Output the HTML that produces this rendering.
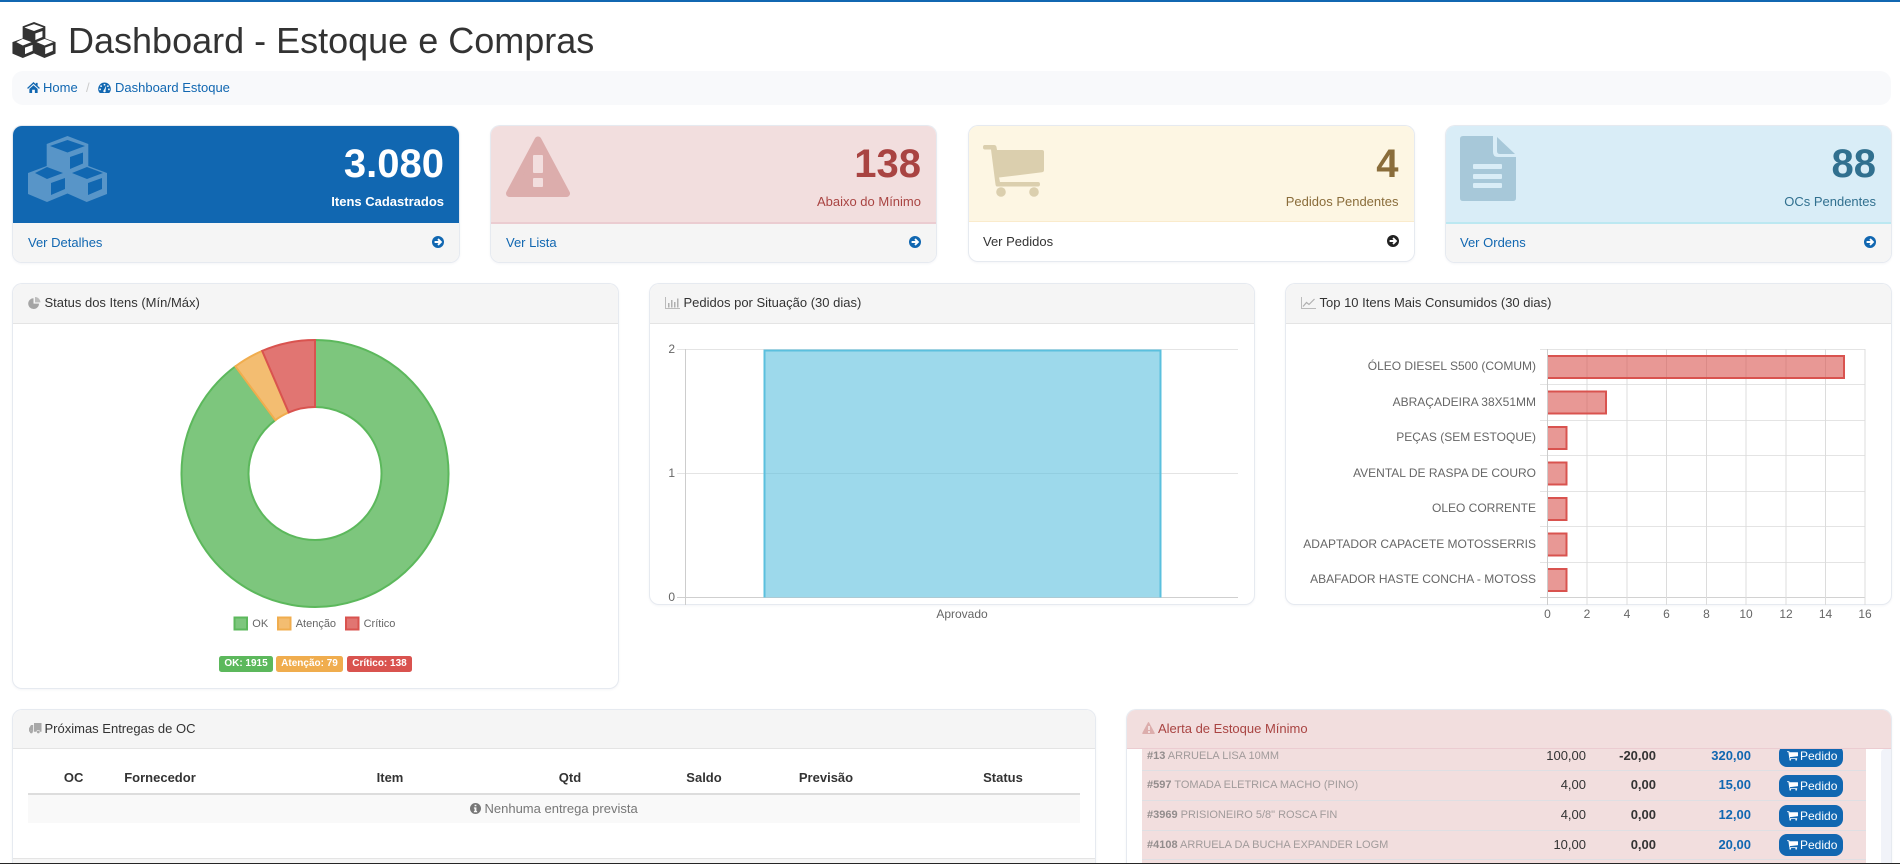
<!DOCTYPE html>
<html lang="pt-BR">
<head>
<meta charset="utf-8">
<title>Dashboard - Estoque e Compras</title>
<style>
html,body{margin:0;padding:0;background:#fff;width:1900px;height:864px;overflow:hidden}
#root{position:relative;width:1900px;height:864px;overflow:hidden;font-family:"Liberation Sans",Arial,sans-serif;font-size:13px;color:#333;background:#fff}
.a{position:absolute}
.t{position:absolute;white-space:nowrap;line-height:20px}
.ctr{text-align:center;width:200px}
.box{position:absolute;box-sizing:border-box;border-radius:9px;background:#fff;box-shadow:0 0 0 1px #e6eaf0,0 1px 2px 1px rgba(30,50,90,.05);overflow:hidden}
.head{position:absolute;left:0;right:0;top:0;background:#f5f5f5;border-bottom:1px solid #e4e4e4}
.foot{position:absolute;left:0;right:0;bottom:0;background:#f5f5f5}
.num{position:absolute;white-space:nowrap;font-size:40px;font-weight:700;line-height:40px;top:144px}
.lbl{position:absolute;white-space:nowrap;font-size:13px;line-height:20px;top:192px}
.blue{color:#1167b1}
svg.i{position:absolute;display:block;overflow:visible}
.it{position:absolute;white-space:nowrap;font-size:11px;line-height:20px;color:#a19b9b;left:1147px}
.it b{color:#928c8c}
.q{position:absolute;white-space:nowrap;line-height:20px;text-align:right;font-size:13px}
.btn{position:absolute;left:1779px;width:64px;height:22px;background:#1167b1;border-radius:8px;color:#fff;font-size:12px;line-height:22px;white-space:nowrap}
.btn span{position:absolute;left:21px;top:0}
.bdg{position:absolute;top:656px;height:16px;line-height:16px;border-radius:2.5px;color:#fff;font-size:10px;font-weight:700;text-align:center;white-space:nowrap}
</style>
</head>
<body>
<div id="root">
<svg width="0" height="0" style="position:absolute">
<symbol id="cubes" viewBox="0 0 79 66"><path fill="currentColor" fill-rule="evenodd" d="M39.5 0L60.3 8V30L79 37V58L58.7 66L39.5 57.5L19 66L0 58V37L18.7 30V8ZM22 10L39.5 16.5L57 10L39.5 4ZM42 21V33L55 27.5V16.5ZM7 37L19 43L35 37L19 31ZM23 47V59L37 53V42ZM44 37L59 43L75 37L59 31ZM60 47V59L74 53V42Z"/></symbol>
<symbol id="arrow" viewBox="0 0 12 12"><circle cx="6" cy="6" r="6" fill="currentColor"/><path d="M2.6 6H8.6M6 3.1L8.9 6L6 8.9" fill="none" stroke="#fff" stroke-width="1.9"/></symbol>
<symbol id="tri" viewBox="0 0 64 61"><path d="M32 4L60.5 57.5H3.5Z" fill="currentColor" stroke="currentColor" stroke-width="7" stroke-linejoin="round"/></symbol>
<symbol id="cart" viewBox="0 0 61 52"><path fill="currentColor" d="M2 0H11Q13 0 13.5 2L14 5H59Q61 5 61 7V25Q61 27 59 27.300L16 32.500L17 37H55Q57 37 57 39.200T55 41.500H14Q12.800 41.500 12.500 39.500L8 4.500H2Q0 4.500 0 2.200T2 0Z"/><circle cx="18" cy="47" r="4.800" fill="currentColor"/><circle cx="51" cy="47" r="4.800" fill="currentColor"/></symbol>
</svg>

<div class="a" style="left:0;top:0;width:1900px;height:2px;background:#1167b1"></div>

<svg class="i" style="left:12px;top:22px;width:44px;height:36px;color:#333"><use href="#cubes" width="44" height="36"/></svg>
<div class="t" style="left:68px;top:19px;font-size:36px;line-height:44px;color:#333">Dashboard - Estoque e Compras</div>

<div class="a" style="left:12px;top:71px;width:1879px;height:34px;background:#f8f9fb;border-radius:11px"></div>
<svg class="i blue" style="left:27px;top:82px" width="13" height="11" viewBox="0 0 14 12"><path fill="#1167b1" d="M7 0L9.500 2.300V1H11.500V4.200L14 6.500L13 7.500L7 2L1 7.500L0 6.500ZM2.500 7.500L7 3.500L11.500 7.500V12H8.500V8.500H5.500V12H2.500Z"/></svg>
<div class="t blue" style="left:43px;top:78px">Home</div>
<div class="t" style="left:86px;top:78px;color:#ccc">/</div>
<svg class="i" style="left:98px;top:82px" width="13" height="11" viewBox="0 0 14 12"><path fill="#1167b1" d="M7 .5A7 7 0 0 0 1.800 12H12.200A7 7 0 0 0 7 .5Z"/><g fill="#f8f9fb"><circle cx="7" cy="3" r="1"/><circle cx="3.300" cy="4.500" r="1"/><circle cx="10.700" cy="4.500" r="1"/><circle cx="2.200" cy="8" r="1"/><circle cx="11.800" cy="8" r="1"/><path d="M6 9.500L8.500 4.500L8.800 4.600L8 10.200Z"/><circle cx="7" cy="10" r="1.300"/></g></svg>
<div class="t blue" style="left:115px;top:78px">Dashboard Estoque</div>

<!-- CARD 1 -->
<div class="box" style="left:13px;top:126px;width:445.500px;height:136px">
  <div class="a" style="left:0;right:0;top:0;height:97px;background:#1167b1"></div>
  <div class="foot" style="height:39px"></div>
</div>
<svg class="i" style="left:28px;top:136px;width:79px;height:66px;color:#5895c8"><use href="#cubes" width="79" height="66"/></svg>
<div class="num" style="right:1456px;color:#fff">3.080</div>
<div class="lbl" style="right:1456px;color:#fff;font-weight:700">Itens Cadastrados</div>
<div class="t blue" style="left:28px;top:233px">Ver Detalhes</div>
<svg class="i" style="left:432px;top:236px;width:12px;height:12px;color:#1167b1"><use href="#arrow" width="12" height="12"/></svg>

<!-- CARD 2 -->
<div class="box" style="left:491px;top:126px;width:445px;height:136px">
  <div class="a" style="left:0;right:0;top:0;height:96px;background:#f2dede;border-bottom:2px solid #ebccd1"></div>
  <div class="foot" style="height:38px"></div>
</div>
<svg class="i" style="left:506px;top:136px;width:64px;height:61px;color:#dcadac"><use href="#tri" width="64" height="61"/></svg>
<div class="a" style="left:533px;top:155px;width:10px;height:18px;background:#f2dede;border-radius:1px"></div>
<div class="a" style="left:533px;top:178px;width:10px;height:9px;background:#f2dede;border-radius:1px"></div>
<div class="num" style="right:979px;color:#a94442">138</div>
<div class="lbl" style="right:979px;color:#a94442">Abaixo do Mínimo</div>
<div class="t blue" style="left:506px;top:233px">Ver Lista</div>
<svg class="i" style="left:909px;top:236px;width:12px;height:12px;color:#1167b1"><use href="#arrow" width="12" height="12"/></svg>

<!-- CARD 3 -->
<div class="box" style="left:968.500px;top:126px;width:445px;height:135px">
  <div class="a" style="left:0;right:0;top:0;height:95px;background:#fdf6e3;border-bottom:1px solid #faebcc"></div>
</div>
<svg class="i" style="left:983px;top:145px;width:61px;height:52px;color:#dbcfae"><use href="#cart" width="61" height="52"/></svg>
<div class="num" style="right:501.500px;color:#8a6d3b">4</div>
<div class="lbl" style="right:501.500px;color:#8a6d3b">Pedidos Pendentes</div>
<div class="t" style="left:983px;top:232px;color:#333">Ver Pedidos</div>
<svg class="i" style="left:1387px;top:235px;width:12px;height:12px;color:#222"><use href="#arrow" width="12" height="12"/></svg>

<!-- CARD 4 -->
<div class="box" style="left:1446px;top:126px;width:445px;height:136px">
  <div class="a" style="left:0;right:0;top:0;height:96px;background:#d9edf7;border-bottom:2px solid #bce8f1"></div>
  <div class="foot" style="height:38px"></div>
</div>
<svg class="i" style="left:1460px;top:136px" width="56" height="65" viewBox="0 0 56 65"><path fill="#a7c8d9" d="M3 0H33V16Q33 21 38 21H56V62Q56 65 53 65H3Q0 65 0 62V3Q0 0 3 0Z"/><path fill="#a7c8d9" d="M37 1L55 18H40Q37 18 37 15Z"/><g fill="#d9edf7"><rect x="13" y="28" width="29" height="5" rx="1"/><rect x="13" y="38" width="29" height="5" rx="1"/><rect x="13" y="47" width="29" height="5" rx="1"/></g></svg>
<div class="num" style="right:24px;color:#31708f">88</div>
<div class="lbl" style="right:24px;color:#31708f">OCs Pendentes</div>
<div class="t blue" style="left:1460px;top:233px">Ver Ordens</div>
<svg class="i" style="left:1864px;top:236px;width:12px;height:12px;color:#1167b1"><use href="#arrow" width="12" height="12"/></svg>

<!-- PANELS ROW 2 -->
<div class="box" style="left:13px;top:284px;width:604.500px;height:404px"><div class="head" style="height:39px"></div></div>
<div class="box" style="left:650px;top:284px;width:604px;height:319.500px"><div class="head" style="height:39px"></div></div>
<div class="box" style="left:1286px;top:284px;width:604.500px;height:319.500px"><div class="head" style="height:39px"></div></div>

<svg class="i" style="left:28px;top:297px" width="13" height="12" viewBox="0 0 13 12"><path fill="#a5a5a5" d="M5.500 1.200A5.400 5.400 0 1 0 11 6.600H5.500Z"/><path fill="#bdbdbd" d="M7 0A5.400 5.400 0 0 1 12.400 5.400H7Z"/></svg>
<div class="t" style="left:44.500px;top:293px">Status dos Itens (Mín/Máx)</div>

<svg class="i" style="left:664.500px;top:297px" width="15" height="12" viewBox="0 0 15 12"><path fill="none" stroke="#bbb" d="M.5 0V11.500H15"/><path fill="#b0b0b0" d="M3 6h1.500v4.500H3zM6 3h1.500v7.500H6zM9 5h1.500v5.500H9zM12 1.500h1.500v9H12z"/></svg>
<div class="t" style="left:683.500px;top:293px">Pedidos por Situação (30 dias)</div>

<svg class="i" style="left:1301px;top:297px" width="15" height="12" viewBox="0 0 15 12"><path fill="none" stroke="#bbb" d="M.5 0V11.500H15"/><path fill="none" stroke="#b0b0b0" stroke-width="1.200" d="M2 9.500L5.500 5.500L8 7.500L13.500 2"/></svg>
<div class="t" style="left:1319.500px;top:293px">Top 10 Itens Mais Consumidos (30 dias)</div>

<!-- CHARTS -->
<svg class="a" style="left:0;top:0" width="1900" height="864" font-family="'Liberation Sans',Arial,sans-serif" font-size="12" fill="#666">
  <!-- donut -->
  <path d="M315 340A133.500 133.500 0 1 1 235.330 366.380L275.310 420.140A66.500 66.500 0 1 0 315 407Z" fill="#7dc67d" stroke="#5cb85c" stroke-width="2"/>
  <path d="M235.330 366.380A133.500 133.500 0 0 1 262.200 350.880L288.700 412.420A66.500 66.500 0 0 0 275.310 420.140Z" fill="#f3bd71" stroke="#f0ad4e" stroke-width="2"/>
  <path d="M262.200 350.880A133.500 133.500 0 0 1 315 340L315 407A66.500 66.500 0 0 0 288.700 412.420Z" fill="#e17572" stroke="#d9534f" stroke-width="2"/>
  <g stroke-width="2">
    <rect x="234.500" y="617.500" width="12.500" height="12" fill="#7dc67d" stroke="#5cb85c"/>
    <rect x="278" y="617.500" width="12.500" height="12" fill="#f3bd71" stroke="#f0ad4e"/>
    <rect x="346" y="617.500" width="12.500" height="12" fill="#e17572" stroke="#d9534f"/>
  </g>
  <g font-size="11">
    <text x="252.300" y="627">OK</text>
    <text x="295.700" y="627">Atenção</text>
    <text x="363.600" y="627">Crítico</text>
  </g>

  <!-- bar chart -->
  <g shape-rendering="crispEdges" stroke="#e4e4e4">
    <path d="M677 349.500H1238M677 473.500H1238"/>
    <path d="M677 597.500H1238" stroke="#cfcfcf"/>
    <path d="M685.500 349V605" stroke="#cdcdcd"/>
  </g>
  <rect x="764" y="350" width="397" height="247.500" fill="#5bc0de" fill-opacity=".6"/>
  <path d="M764.500 597.500V350.500H1160.500V597.500" fill="none" stroke="#5bc0de" stroke-width="2"/>
  <text x="675" y="353" text-anchor="end">2</text>
  <text x="675" y="477" text-anchor="end">1</text>
  <text x="675" y="601" text-anchor="end">0</text>
  <text x="962" y="618" text-anchor="middle">Aprovado</text>

  <!-- horizontal chart -->
  <g shape-rendering="crispEdges" stroke="#e4e4e4">
    <path d="M1540 349.500H1865M1540 384.500H1865M1540 420.500H1865M1540 455.500H1865M1540 491.500H1865M1540 526.500H1865M1540 562.500H1865"/>
    <path d="M1540 597.500H1865" stroke="#d2d2d2"/>
    <g stroke="#dcdcdc"><path d="M1587 349V605M1627 349V605M1666.500 349V605M1706.500 349V605M1746 349V605M1786 349V605M1825.500 349V605M1865 349V605"/></g>
    <path d="M1547.500 349V605" stroke="#cdcdcd"/>
  </g>
  <g fill="#d9534f" fill-opacity=".6">
    <rect x="1548" y="355" width="297" height="24"/>
    <rect x="1548" y="390.500" width="59" height="24"/>
    <rect x="1548" y="426" width="19.500" height="24"/>
    <rect x="1548" y="461.500" width="19.500" height="24"/>
    <rect x="1548" y="497" width="19.500" height="24"/>
    <rect x="1548" y="532.500" width="19.500" height="24"/>
    <rect x="1548" y="568" width="19.500" height="24"/>
  </g>
  <g fill="none" stroke="#d9534f" stroke-width="2">
    <path d="M1548 356H1844V378H1548"/>
    <path d="M1548 391.500H1606V413.500H1548"/>
    <path d="M1548 427H1566.500V449H1548"/>
    <path d="M1548 462.500H1566.500V484.500H1548"/>
    <path d="M1548 498H1566.500V520H1548"/>
    <path d="M1548 533.500H1566.500V555.500H1548"/>
    <path d="M1548 569H1566.500V591H1548"/>
  </g>
  <g text-anchor="end">
    <text x="1536" y="370">ÓLEO DIESEL S500 (COMUM)</text>
    <text x="1536" y="406">ABRAÇADEIRA 38X51MM</text>
    <text x="1536" y="441">PEÇAS (SEM ESTOQUE)</text>
    <text x="1536" y="477">AVENTAL DE RASPA DE COURO</text>
    <text x="1536" y="512">OLEO CORRENTE</text>
    <text x="1536" y="548">ADAPTADOR CAPACETE MOTOSSERRIS</text>
    <text x="1536" y="583">ABAFADOR HASTE CONCHA - MOTOSS</text>
  </g>
  <g text-anchor="middle">
    <text x="1547.500" y="618">0</text>
    <text x="1587" y="618">2</text>
    <text x="1627" y="618">4</text>
    <text x="1666.500" y="618">6</text>
    <text x="1706.500" y="618">8</text>
    <text x="1746" y="618">10</text>
    <text x="1786" y="618">12</text>
    <text x="1825.500" y="618">14</text>
    <text x="1865" y="618">16</text>
  </g>
</svg>

<div class="bdg" style="left:219px;width:54px;background:#5cb85c">OK: 1915</div>
<div class="bdg" style="left:276px;width:67px;background:#f0ad4e">Atenção: 79</div>
<div class="bdg" style="left:347px;width:65px;background:#d9534f">Crítico: 138</div>

<!-- BOTTOM LEFT PANEL -->
<div class="box" style="left:13px;top:710px;width:1081.500px;height:190px">
  <div class="head" style="height:38px"></div>
  <div class="a" style="left:0;right:0;top:148px;height:40px;background:#f5f5f5;border-top:1px solid #e4e4e4"></div>
</div>
<svg class="i" style="left:28.500px;top:722px" width="13" height="12" viewBox="0 0 13 12"><path fill="#a8a8a8" d="M5 1H12.500V9.800H11A1.700 1.700 0 0 0 7.500 9.800H5ZM4.200 3V9.800H3.800A1.700 1.700 0 0 0 .6 9.800H0V6.200L2 3Z"/><circle cx="2.300" cy="10" r="1.400" fill="#a8a8a8"/><circle cx="9.300" cy="10" r="1.400" fill="#a8a8a8"/></svg>
<div class="t" style="left:44.500px;top:719px">Próximas Entregas de OC</div>

<div class="t ctr" style="left:-26.400px;top:767.500px;font-weight:700">OC</div>
<div class="t ctr" style="left:60px;top:767.500px;font-weight:700">Fornecedor</div>
<div class="t ctr" style="left:290px;top:767.500px;font-weight:700">Item</div>
<div class="t ctr" style="left:470px;top:767.500px;font-weight:700">Qtd</div>
<div class="t ctr" style="left:604px;top:767.500px;font-weight:700">Saldo</div>
<div class="t ctr" style="left:726px;top:767.500px;font-weight:700">Previsão</div>
<div class="t ctr" style="left:903px;top:767.500px;font-weight:700">Status</div>
<div class="a" style="left:28px;top:793px;width:1052px;height:2px;background:#ddd"></div>
<div class="a" style="left:28px;top:795px;width:1052px;height:28px;background:#f9f9f9"></div>
<svg class="i" style="left:470px;top:803px" width="11" height="11" viewBox="0 0 11 11"><circle cx="5.500" cy="5.500" r="5.500" fill="#777"/><path fill="#f9f9f9" d="M4.600 1.800H6.400V3.300H4.600ZM3.900 4.400H6.400V8H7.100V9.200H3.900V8H4.600V5.600H3.900Z"/></svg>
<div class="t" style="left:484.500px;top:799px;color:#777">Nenhuma entrega prevista</div>

<!-- BOTTOM RIGHT PANEL -->
<div class="box" style="left:1127px;top:710px;width:763.500px;height:190px"></div>
<div class="a" style="left:1142px;top:749px;width:724px;height:115px;background:#f2dede"></div>
<div class="a" style="left:1881px;top:749px;width:9.500px;height:115px;background:#f1f3f9;border-radius:4px 0 0 0"></div>
<div class="a" style="left:1142px;top:770px;width:724px;height:1px;background:#dfdfe3"></div>
<div class="a" style="left:1142px;top:800px;width:724px;height:1px;background:#dfdfe3"></div>
<div class="a" style="left:1142px;top:830px;width:724px;height:1px;background:#dfdfe3"></div>
<div class="a" style="left:1142px;top:859px;width:724px;height:1px;background:#dfdfe3"></div>

<div class="it" style="top:746px"><b>#13</b> ARRUELA LISA 10MM</div>
<div class="it" style="top:775px"><b>#597</b> TOMADA ELETRICA MACHO (PINO)</div>
<div class="it" style="top:805px"><b>#3969</b> PRISIONEIRO 5/8" ROSCA FIN</div>
<div class="it" style="top:835px"><b>#4108</b> ARRUELA DA BUCHA EXPANDER LOGM</div>

<div class="q" style="right:314px;top:746px">100,00</div>
<div class="q" style="right:314px;top:775px">4,00</div>
<div class="q" style="right:314px;top:805px">4,00</div>
<div class="q" style="right:314px;top:835px">10,00</div>

<div class="q" style="right:244px;top:746px;font-weight:700">-20,00</div>
<div class="q" style="right:244px;top:775px;font-weight:700">0,00</div>
<div class="q" style="right:244px;top:805px;font-weight:700">0,00</div>
<div class="q" style="right:244px;top:835px;font-weight:700">0,00</div>

<div class="q blue" style="right:149px;top:746px;font-weight:700">320,00</div>
<div class="q blue" style="right:149px;top:775px;font-weight:700">15,00</div>
<div class="q blue" style="right:149px;top:805px;font-weight:700">12,00</div>
<div class="q blue" style="right:149px;top:835px;font-weight:700">20,00</div>

<div class="btn" style="top:745px"><svg class="i" style="left:8px;top:6px;width:11px;height:10px;color:#fff"><use href="#cart" width="11" height="10"/></svg><span>Pedido</span></div>
<div class="btn" style="top:775px"><svg class="i" style="left:8px;top:6px;width:11px;height:10px;color:#fff"><use href="#cart" width="11" height="10"/></svg><span>Pedido</span></div>
<div class="btn" style="top:805px"><svg class="i" style="left:8px;top:6px;width:11px;height:10px;color:#fff"><use href="#cart" width="11" height="10"/></svg><span>Pedido</span></div>
<div class="btn" style="top:834px"><svg class="i" style="left:8px;top:6px;width:11px;height:10px;color:#fff"><use href="#cart" width="11" height="10"/></svg><span>Pedido</span></div>

<div class="a" style="left:1127px;top:710px;width:763.500px;height:38px;background:#f2dede;border-bottom:1px solid #ebccd1;border-radius:9px 9px 0 0"></div>
<svg class="i" style="left:1142px;top:722px;width:13px;height:12px;color:#dcadac"><use href="#tri" width="13" height="12"/></svg>
<div class="a" style="left:1148px;top:726px;width:1.500px;height:4px;background:#f2dede"></div>
<div class="a" style="left:1148px;top:731px;width:1.500px;height:1.500px;background:#f2dede"></div>
<div class="t" style="left:1158px;top:719px;color:#a94442">Alerta de Estoque Mínimo</div>

<div class="a" style="left:0;top:863px;width:1900px;height:1px;background:#262626"></div>
</div>
</body>
</html>
